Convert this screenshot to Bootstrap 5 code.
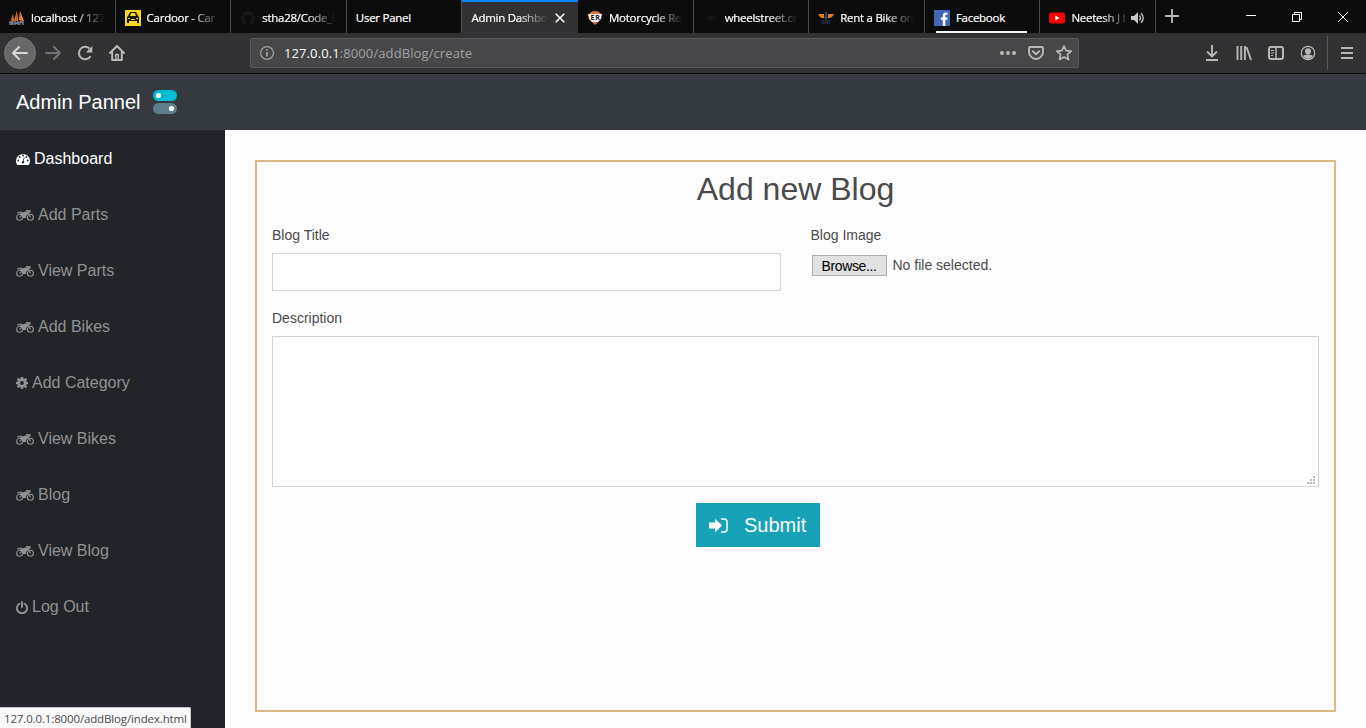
<!DOCTYPE html>
<html lang="en">
<head>
<meta charset="utf-8">
<meta name="viewport" content="width=device-width, initial-scale=1">
<title>Admin Dashboard</title>
<link href="https://cdn.jsdelivr.net/npm/bootstrap@5.3.0/dist/css/bootstrap.min.css" rel="stylesheet">
<style>
body{font-family:"Liberation Sans",Arial,sans-serif;background:#fdfdfd;height:728px;overflow:hidden;color:#4a4a4a}
svg{display:block;flex:none}
.chrome{font-family:"Open Sans","Noto Sans",sans-serif}
.tabs{height:33px;background:#0c0c0d;color:#fff;font-size:11.5px}
.tab{width:115.62px;height:33px;padding:2px 10px 0 9px;border-right:1px solid #4d4d4f;position:relative;flex:none}
.tab svg{margin-right:6px}
.tab-label{flex:1;min-width:0;white-space:nowrap;letter-spacing:-.27px;-webkit-text-stroke:.2px #fff}
.fade-end{-webkit-mask-image:linear-gradient(90deg,#000 calc(100% - 30px),transparent);mask-image:linear-gradient(90deg,#000 calc(100% - 30px),transparent)}
.tab-current{background:#323234;border-right-color:#323234;padding-right:12px}
.tab-current::before{content:"";position:absolute;inset:0 -1px auto 0;height:2px;background:#0a84ff}
.tab-current svg{margin:0 0 0 7px}
.notify::after{content:"";position:absolute;left:11px;width:91px;bottom:0;height:2px;background:#f4f4f4}
.toolbar{height:41px;background:#323234;border-bottom:1px solid #0c0c0d;color:#b8b8b9}
.back{width:32px;height:32px;border-radius:50%;background:#68686a;border:1px solid #777779;margin-left:4px}
.url{width:829px;height:30px;margin-left:125px;background:#474749;border:1px solid #5b5b5d;border-radius:2px;font-size:13px;padding:0 6px 0 8px;color:#a2a2a4}
.url b{font-weight:400;color:#f9f9fa}
.url-text{margin-left:9px;letter-spacing:.1px;padding-top:2px}
.tools{margin-left:125px}
.menu-sep{width:1px;height:34px;background:#5b5b5d;margin-left:11px;margin-right:12px}
.window-buttons{gap:36px;margin-right:18px}
.admin-bar{height:56px;background:#343a40;padding-left:16px}
.admin-bar .navbar-brand{font-size:20px;color:#fff;line-height:30px;margin-right:12px}
.body-row{height:598px}
.side{width:225px;background:#212529}
.side .nav-link{height:56px;padding:17px 16px 15px;font-size:16px;line-height:24px;color:#909294;gap:4px}
.side .nav-link.active{color:#fff}
.page{padding:30px 30px 0}
.blog-box{height:552px;border:2px solid #deb887;padding:8px 15px;font-size:14px}
.blog-box h2{font-size:32px;line-height:38.4px;margin-bottom:16px;color:#4a4a4a}
.blog-box label{line-height:21px;padding-top:1px;margin-bottom:7px;display:block}
.blog-box .form-control{border:1px solid #ced4da;border-radius:0;background:#fff}
.in-title{height:38px}
.in-desc{height:151px;resize:none}
.pick{width:75px;height:21px;border:1px solid #adadad;background:#e1e1e1;color:#000;line-height:20px;margin:1px 6px 0 1px;padding:0;letter-spacing:-.35px}
.pick,.pick-note{font-size:14px}
.pick-note{padding-top:2px}
.grip{position:absolute;right:4px;bottom:3px}
.submit{width:124px;height:44px;background:#17a2b8;border-radius:0;font-size:20px;color:#fff;padding:0 13px;margin:16px 0 0 424px;border:0}
.status{position:absolute;left:0;bottom:0;width:191px;height:21px;background:#f9f9fa;border:1px solid #c6c6c7;border-width:1px 1px 0 0;border-top-right-radius:2px;font-size:11.5px;line-height:21px;padding-left:4px;color:#4a4a4f;white-space:nowrap;letter-spacing:-.14px}
</style>
</head>
<body>
<svg width="0" height="0" class="position-absolute" aria-hidden="true">
<symbol id="moto" viewBox="0 0 18 13">
<g fill="none" stroke="currentColor"><circle cx="3.600" cy="8.300" r="3" stroke-width="1.100"/><circle cx="14.400" cy="8.300" r="3" stroke-width="1.100"/><path d="M10 1.600h1.600l2.800 6.700M3.600 8.300l2.500-2.700M1 3.700h3" stroke-width="1.100"/></g>
<path fill="currentColor" d="M2.700 2.800h2.800l1.700.8 2-1.200 2.500.4 1 1.600-1.900 1.600-.9 3.100H6.800L6.200 7.500 4.600 4.500zM11 2.100l2.200-1.100h1.400v2.600h-1.200L11.700 2.500z"/>
</symbol>
</svg>

<header class="chrome">
<div class="tabs d-flex">
  <div class="tab d-flex align-items-center"><svg width="16" height="16" viewBox="0 0 16 16"><path d="M2 10 4 4l1 7zM5 11 8 1l1 10zM10 10l1-9 4 10z" fill="#f59322"/><path d="M4 4v7H2zM8 1v10H6zM12 2v9h-1z" fill="#c75a18"/><path d="M1 15v-3h3v2H2m4 1v-4m0 2h3m0-2v4m2 0v-3h3v3" fill="none" stroke="#8f8fae" stroke-width="1.300"/></svg><span class="tab-label fade-end">localhost / 127</span></div>
  <div class="tab d-flex align-items-center"><svg width="16" height="16" viewBox="0 0 16 16"><path fill="#f9d71c" d="M0 0h16v16H0z"/><path d="M5 2h6l2 4 1 1v6h-2v-2H4v2H2V7l1-1z" fill="#161616"/><path d="M6 3h4l1 3H5zM3 8h2v1H3zm8 0h2v1h-2zM6 9h4v1H6z" fill="#f9d71c"/></svg><span class="tab-label fade-end">Cardoor - Car</span></div>
  <div class="tab d-flex align-items-center"><svg width="16" height="16" viewBox="0 0 16 16"><circle cx="8" cy="8" r="7" fill="#17191c"/><path d="M4 4l2 1h4l2-1v3c1 3-1 4-2 4v4H6v-4C4 11 3 9 4 7z" fill="#0c0c0d"/></svg><span class="tab-label fade-end">stha28/Code_l</span></div>
  <div class="tab d-flex align-items-center"><span class="tab-label">User Panel</span></div>
  <div class="tab tab-current d-flex align-items-center"><span class="tab-label fade-end">Admin Dashbo</span><svg width="10" height="10" viewBox="0 0 10 10"><path d="m.7.7 8.600 8.600m0-8.600L.7 9.300" stroke="#f9f9fa" stroke-width="1.600"/></svg></div>
  <div class="tab d-flex align-items-center"><svg width="16" height="16" viewBox="0 0 16 16"><path d="M4 2q4-2 8 0l2 2H2zM4 11h8l-4 4z" fill="#dc7442"/><path d="M1 4h14l-1 5-3 3H5L2 9z" fill="#f2eeea"/><text x="3.400" y="10" font-size="7" font-weight="700" fill="#222" textLength="9.500">ER</text></svg><span class="tab-label fade-end">Motorcycle Re</span></div>
  <div class="tab d-flex align-items-center"><svg width="16" height="16" viewBox="0 0 16 16"><path d="M2 7h4l2-2 2 2h4l-3 2-3 2-3-2z" fill="#151617"/></svg><span class="tab-label fade-end">wheelstreet.co</span></div>
  <div class="tab d-flex align-items-center"><svg width="16" height="16" viewBox="0 0 16 16"><path d="M0 4h6v4H4L2 7zm16 0h-6v4h2l2-1z" fill="#e67c26"/><path d="M7 2h2v2l1 4-2 2-2-2 1-4z" fill="#294162"/><path d="M3 11h10M4 13h8" stroke="#1c2e48" stroke-width="1.300"/></svg><span class="tab-label fade-end">Rent a Bike on</span></div>
  <div class="tab notify d-flex align-items-center"><svg width="16" height="16" viewBox="0 0 16 16"><path fill="#4267b2" d="M0 0h16v16H0z"/><path fill="#fff" d="M8.800 16V9.800H6.900V7.400h1.900V5.600c0-2 1.200-3 3-3l1.800.1v2.100h-1.300c-.8 0-1 .5-1 1.100v1.500h2.200l-.3 2.400h-1.900V16z"/></svg><span class="tab-label">Facebook</span></div>
  <div class="tab d-flex align-items-center"><svg width="16" height="16" viewBox="0 0 16 16"><rect y="2.500" width="16" height="11" rx="2.500" fill="red"/><path d="M6.300 5.500v5l4.200-2.500z" fill="#fff"/></svg><span class="tab-label fade-end">Neetesh J I</span><svg width="14" height="12" viewBox="0 0 14 12" class="me-0"><path d="M0 4h3l4-4v12L3 8H0z" fill="#c8c8c8"/><path d="M8.500 3.500q2 2.500 0 5M10 1.300q4.500 4.700 0 9.400" fill="none" stroke="#c8c8c8" stroke-width="1.300"/></svg></div>
  <svg width="14" height="14" viewBox="0 0 14 14" style="margin:9px 0 0 9px"><path d="M7 0v14M0 7h14" stroke="#b8b8b9" stroke-width="1.800"/></svg>
  <div class="window-buttons d-flex ms-auto pt-2 mt-1"><svg width="10" height="10"><path d="M0 3.500h10" stroke="#fff"/></svg><svg width="10" height="10"><path d="M.5 2.500h7v7h-7zM2.500 2.500V.5h7v7h-2" fill="none" stroke="#fff"/></svg><svg width="10" height="10"><path d="m0 0 10 10M10 0 0 10" stroke="#fff"/></svg></div>
</div>
<div class="toolbar d-flex align-items-center">
  <div class="back d-flex align-items-center justify-content-center"><svg width="16" height="16" viewBox="0 0 16 16" fill="none" stroke="#d8d8d9" stroke-width="2" stroke-linecap="round" stroke-linejoin="round"><path d="M15 8H1m6-6L1 8l6 6"/></svg></div>
  <div class="d-flex" style="gap:16px;margin-left:9px">
  <svg width="16" height="16" viewBox="0 0 16 16" fill="none" stroke="#737375" stroke-width="2" stroke-linecap="round" stroke-linejoin="round"><path d="M1 8h14M9 2l6 6-6 6"/></svg>
  <svg width="16" height="16" viewBox="0 0 16 16"><path d="M13.500 11.200A6.200 6.200 0 1 1 12.500 3.600" fill="none" stroke="currentColor" stroke-width="2"/><path d="M15.300 1v6.500H8.800z" fill="currentColor"/></svg>
  <svg width="16" height="16" viewBox="0 0 16 16" fill="none" stroke="currentColor" stroke-width="2" stroke-linejoin="round" stroke-linecap="round"><path d="M1 8l7-7 7 7M3.200 7v8h9.600V7"/><path d="M6.800 14V9.500h2.400V14" stroke-width="1.500"/></svg>
  </div>
  <div class="url d-flex align-items-center"><svg width="16" height="16" viewBox="0 0 16 16" fill="none" stroke="currentColor"><circle cx="8" cy="8" r="6.400" stroke-width="1.200"/><path d="M8 7v4.500M8 4.200v1.600" stroke-width="1.700"/></svg><span class="url-text"><b>127.0.0.1</b>:8000/addBlog/create</span>
  <div class="d-flex ms-auto" style="gap:12px;color:#b8b8b9"><svg width="16" height="16" viewBox="0 0 16 16" fill="currentColor"><circle cx="2" cy="8" r="2"/><circle cx="8" cy="8" r="2"/><circle cx="14" cy="8" r="2"/></svg><svg width="16" height="16" viewBox="0 0 16 16" fill="none" stroke="currentColor" stroke-width="1.900" stroke-linecap="round" stroke-linejoin="round"><path d="M2 2h12q1 0 1 1v4a7 7 0 0 1-14 0V3q0-1 1-1z"/><path d="m4.800 6.200 3.200 3 3.200-3"/></svg><svg width="16" height="16" viewBox="0 0 16 16" fill="none" stroke="currentColor" stroke-width="1.700" stroke-linejoin="round"><path d="m8 1 2.100 4.700 5.100.5-3.800 3.400 1.100 5L8 12l-4.500 2.600 1.100-5L.8 6.200l5.100-.5z"/></svg></div></div>
  <div class="tools d-flex" style="gap:16px"><svg width="16" height="16" viewBox="0 0 16 16" fill="none" stroke="currentColor" stroke-width="1.900"><path d="M8 0v11M3 6.500l5 5 5-5M2 15h12"/></svg><svg width="16" height="16" viewBox="0 0 16 16" stroke="currentColor" stroke-width="1.900"><path d="M1.500 1v14M5.200 1v14M8.900 1v14M10.500 2l4.500 13"/></svg><svg width="16" height="16" viewBox="0 0 16 16" fill="none" stroke="currentColor"><rect x="1" y="2" width="14" height="12" rx="2" stroke-width="2"/><path d="M8 2v12" stroke-width="1.500"/><path d="M3 5.500h3M3 8h3M3 10.500h2"/></svg><svg width="16" height="16" viewBox="0 0 16 16"><circle cx="8" cy="8" r="6.700" fill="none" stroke="currentColor" stroke-width="1.200"/><circle cx="8" cy="6.200" r="3" fill="currentColor"/><path d="M3 11q2-2 5-1.500 3-.5 5 1.500-2 3-5 3t-5-3" fill="currentColor"/></svg></div>
  <div class="menu-sep"></div><svg width="14" height="12"><path d="M1 1h12M1 6h12M1 11h12" stroke="currentColor" stroke-width="2"/></svg>
</div>
</header>

<nav class="navbar admin-bar py-0 justify-content-start"><a class="navbar-brand py-0" href="#">Admin Pannel</a><svg width="24" height="24" viewBox="0 0 24 24"><rect width="24" height="11" rx="5.500" fill="#00bcd4"/><rect y="13" width="24" height="11" rx="5.500" fill="#607d8b"/><circle cx="5.500" cy="5.500" r="2.600" fill="#fff"/><circle cx="18.500" cy="18.500" r="2.600" fill="#fff"/></svg></nav>

<div class="body-row d-flex position-relative">
<aside class="side nav flex-column flex-nowrap flex-shrink-0">
  <a class="nav-link active d-flex align-items-center" href="#"><svg width="14" height="12" viewBox="0 0 14 12"><path fill="currentColor" d="M1 11.500a7 7 0 1 1 12 0q-.2.500-.7.500H1.700q-.5 0-.7-.5z"/><g fill="#212529"><circle cx="2.200" cy="7.500" r=".9"/><circle cx="3.600" cy="4" r=".9"/><circle cx="7" cy="2.500" r=".9"/><circle cx="10.400" cy="4" r=".9"/><circle cx="11.800" cy="7.500" r=".9"/><path d="m7.800 4.200.8.200-.9 3.600q.9.700.6 1.600-.4 1-1.500.8-1.100-.4-.9-1.500.3-.9 1.100-1z"/></g></svg>Dashboard</a>
  <a class="nav-link d-flex align-items-center" href="#"><svg width="18" height="13"><use href="#moto"/></svg>Add Parts</a>
  <a class="nav-link d-flex align-items-center" href="#"><svg width="18" height="13"><use href="#moto"/></svg>View Parts</a>
  <a class="nav-link d-flex align-items-center" href="#"><svg width="18" height="13"><use href="#moto"/></svg>Add Bikes</a>
  <a class="nav-link d-flex align-items-center" href="#"><svg width="12" height="12" viewBox="0 0 12 12"><circle cx="6" cy="6" r="3.300" fill="none" stroke="currentColor" stroke-width="2.800"/><path d="M6 0v2.500M6 9.500V12M0 6h2.500M9.500 6H12M1.600 1.600l1.900 1.900M8.500 8.500l1.900 1.900M10.400 1.600 8.500 3.500M3.500 8.500l-1.900 1.900" stroke="currentColor" stroke-width="2.400"/></svg>Add Category</a>
  <a class="nav-link d-flex align-items-center" href="#"><svg width="18" height="13"><use href="#moto"/></svg>View Bikes</a>
  <a class="nav-link d-flex align-items-center" href="#"><svg width="18" height="13"><use href="#moto"/></svg>Blog</a>
  <a class="nav-link d-flex align-items-center" href="#"><svg width="18" height="13"><use href="#moto"/></svg>View Blog</a>
  <a class="nav-link d-flex align-items-center" href="#"><svg width="12" height="13" viewBox="0 0 12 13" fill="none" stroke="currentColor" stroke-width="1.900" stroke-linecap="round"><path d="M3.400 2.800a5.100 5.100 0 1 0 5.200 0M6 1v5"/></svg>Log Out</a>
</aside>
<main class="page flex-grow-1">
  <form class="blog-box">
    <h2 class="text-center fw-normal">Add new Blog</h2>
    <div class="row" style="--bs-gutter-x:30px">
      <div class="col-6"><label for="t">Blog Title</label><input id="t" class="form-control in-title"></div>
      <div class="col-6"><label>Blog Image</label><div class="d-flex align-items-center"><button type="button" class="pick btn rounded-0">Browse...</button><span class="pick-note">No file selected.</span></div></div>
    </div>
    <div class="position-relative mt-3"><label for="d">Description</label><textarea id="d" class="form-control in-desc"></textarea><svg class="grip" width="8" height="8" fill="#b9b9b9"><path d="M6 0h2v2H6zM3 3h2v2H3zm3 0h2v2H6zM0 6h2v2H0zm3 0h2v2H3zm3 0h2v2H6z"/></svg></div>
    <button type="button" class="btn submit d-flex align-items-center"><svg width="19" height="15" viewBox="0 0 19 15"><path d="M0 4.500h6V.8l7.200 6.700L6 14.200v-3.700H0z" fill="#fff"/><path d="M12 1h3q3 0 3 3v7q0 3-3 3h-3" fill="none" stroke="#fff" stroke-width="1.500"/></svg><span class="ms-3">Submit</span></button>
  </form>
</main>
<div class="status chrome">127.0.0.1:8000/addBlog/index.html</div>
</div>
<script src="https://cdn.jsdelivr.net/npm/bootstrap@5.3.0/dist/js/bootstrap.bundle.min.js"></script>
</body>
</html>
